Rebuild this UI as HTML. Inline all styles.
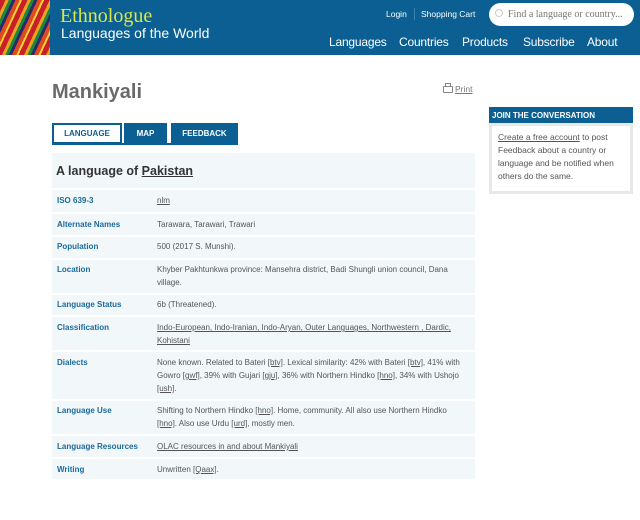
<!DOCTYPE html>
<html><head><meta charset="utf-8"><style>
*{margin:0;padding:0;box-sizing:border-box}
body{width:640px;height:520px;background:#fff;font-family:"Liberation Sans",sans-serif;position:relative;overflow:hidden}
.hdr{position:absolute;left:0;top:0;width:640px;height:55px;background:#0b5f92}
.stripes{position:absolute;left:0;top:0;width:50px;height:55px;background:repeating-linear-gradient(115deg,#c8202a 0 5px,#f0a020 5px 8px,#1a8a3a 8px 11px,#2a2a6a 11px 14px,#e04a20 14px 18px,#f4d030 18px 20px)}
.a{position:absolute}
.nav{color:#fff;font-size:12px;letter-spacing:-0.2px}
.row{position:absolute;left:52px;width:423px;background:#f2f7fa}
.lab{position:absolute;left:5px;font-size:8px;font-weight:bold;color:#1a6a9a}
.val{position:absolute;left:105px;width:310px;font-size:8px;color:#555;line-height:13px}
u{color:#555}
</style></head><body>
<div class="hdr"></div><div class="stripes"></div>
<div class="a" style="left:60px;top:5px;font-family:'Liberation Serif',serif;font-size:20px;color:#d8e84a">Ethnologue</div>
<div class="a" style="left:61px;top:25px;font-size:14px;color:#fff">Languages of the World</div>
<div class="a" style="left:386px;top:9px;font-size:8.5px;color:#fff">Login</div>
<div class="a" style="left:414px;top:8px;width:1px;height:12px;background:#3f82b0"></div>
<div class="a" style="left:421px;top:9px;font-size:8.5px;color:#fff">Shopping Cart</div>
<div class="a" style="left:489px;top:3px;width:145px;height:23px;background:#fff;border-radius:12px"></div>
<div class="a" style="left:495px;top:9px;width:8px;height:8px;border:1px solid #ccc;border-radius:50%"></div>
<div class="a" style="left:508px;top:9px;font-family:'Liberation Serif',serif;font-size:10px;color:#777">Find a language or country...</div>
<div class="a nav" style="left:329px;top:35px">Languages</div>
<div class="a nav" style="left:399px;top:35px">Countries</div>
<div class="a nav" style="left:462px;top:35px">Products</div>
<div class="a nav" style="left:523px;top:35px">Subscribe</div>
<div class="a nav" style="left:587px;top:35px">About</div>

<div class="a" style="left:52px;top:81px;font-size:20px;font-weight:bold;color:#6a6a6a">Mankiyali</div>
<div class="a" style="left:443px;top:86px;width:10px;height:7px;border:1px solid #888;border-radius:1px"></div>
<div class="a" style="left:445px;top:83px;width:6px;height:4px;border:1px solid #888;border-bottom:none"></div>
<div class="a" style="left:455px;top:84px;font-size:8.5px;color:#777;text-decoration:underline">Print</div>

<div class="a" style="left:52px;top:123px;width:70px;height:21px;border:2px solid #0b5f92;background:#fff;color:#0b5f92;font-size:8px;font-weight:bold;text-align:center;line-height:17px">LANGUAGE</div>
<div class="a" style="left:124px;top:123px;width:43px;height:21px;background:#0b5f92;color:#fff;font-size:8px;font-weight:bold;text-align:center;line-height:21px">MAP</div>
<div class="a" style="left:171px;top:123px;width:67px;height:21px;background:#0b5f92;color:#fff;font-size:8px;font-weight:bold;text-align:center;line-height:21px">FEEDBACK</div>
<div class="a" style="left:52px;top:143px;width:186px;height:2px;background:#0b5f92"></div>

<div class="row" style="top:153px;height:35px"><div class="a" style="left:4px;top:11px;font-size:12.5px;font-weight:bold;color:#333">A language of <u style="color:#333">Pakistan</u></div></div>

<div class="row" style="top:190px;height:22px"><div class="lab" style="top:6px">ISO 639-3</div><div class="val" style="top:4px"><u>nlm</u></div></div>
<div class="row" style="top:214px;height:21px"><div class="lab" style="top:6px">Alternate Names</div><div class="val" style="top:4px">Tarawara, Tarawari, Trawari</div></div>
<div class="row" style="top:237px;height:21px"><div class="lab" style="top:5px">Population</div><div class="val" style="top:3px">500 (2017 S. Munshi).</div></div>
<div class="row" style="top:260px;height:33px"><div class="lab" style="top:5px">Location</div><div class="val" style="top:3px">Khyber Pakhtunkwa province: Mansehra district, Badi Shungli union council, Dana village.</div></div>
<div class="row" style="top:295px;height:20px"><div class="lab" style="top:5px">Language Status</div><div class="val" style="top:3px">6b (Threatened).</div></div>
<div class="row" style="top:317px;height:33px"><div class="lab" style="top:6px">Classification</div><div class="val" style="top:4px"><u>Indo-European, Indo-Iranian, Indo-Aryan, Outer Languages, Northwestern , Dardic, Kohistani</u></div></div>
<div class="row" style="top:352px;height:47px"><div class="lab" style="top:6px">Dialects</div><div class="val" style="top:4px">None known. Related to Bateri <u>[btv]</u>. Lexical similarity: 42% with Bateri <u>[btv]</u>, 41% with Gowro <u>[gwf]</u>, 39% with Gujari <u>[gju]</u>, 36% with Northern Hindko <u>[hno]</u>, 34% with Ushojo <u>[ush]</u>.</div></div>
<div class="row" style="top:401px;height:33px"><div class="lab" style="top:5px">Language Use</div><div class="val" style="top:3px">Shifting to Northern Hindko <u>[hno]</u>. Home, community. All also use Northern Hindko <u>[hno]</u>. Also use Urdu <u>[urd]</u>, mostly men.</div></div>
<div class="row" style="top:436px;height:21px"><div class="lab" style="top:6px">Language Resources</div><div class="val" style="top:4px"><u>OLAC resources in and about Mankiyali</u></div></div>
<div class="row" style="top:459px;height:20px"><div class="lab" style="top:6px">Writing</div><div class="val" style="top:4px">Unwritten <u>[Qaax]</u>.</div></div>

<div class="a" style="left:489px;top:107px;width:144px;height:16px;background:#0b5f92;color:#fff;font-size:8px;font-weight:bold;padding:4px 0 0 3px">JOIN THE CONVERSATION</div>
<div class="a" style="left:489px;top:123px;width:144px;height:71px;background:#e8e8e8;padding:3px"><div style="background:#fff;height:65px;padding:5px 6px;font-size:8.5px;line-height:13px;color:#555"><u>Create a free account</u> to post Feedback about a country or language and be notified when others do the same.</div></div>
</body></html>
